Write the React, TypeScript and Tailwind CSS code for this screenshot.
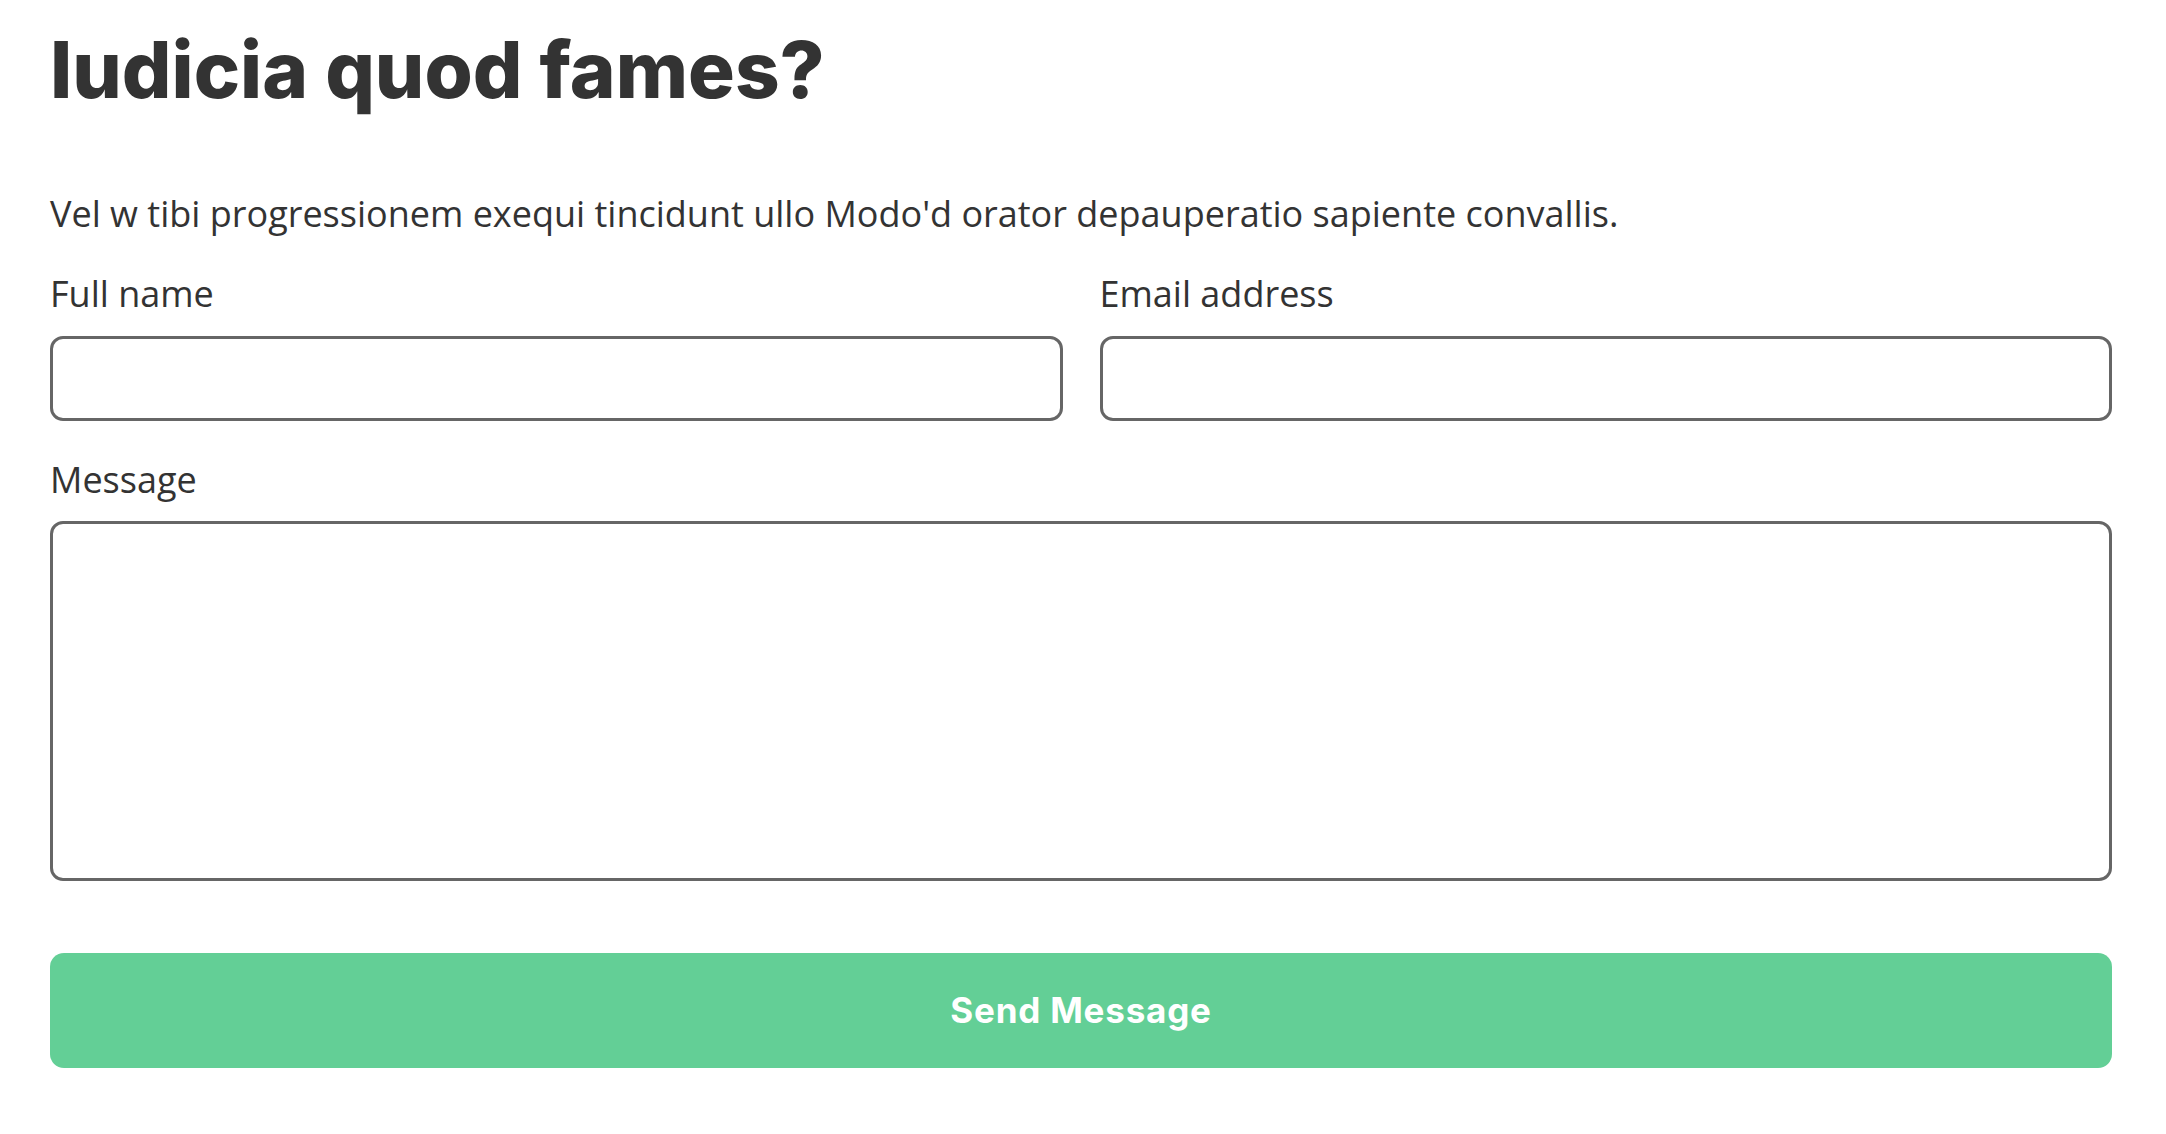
import React from "react";

const body = { fontFamily: '"Open Sans", "Noto Sans", sans-serif' };

function Field({ label, area }: { label: string; area?: boolean }) {
  return (
    <label className="flex flex-col">
      <span className="text-[36px] leading-[46px] text-[#333]" style={body}>
        {label}
      </span>
      {area ? (
        <textarea className="mt-[18px] h-[360px] w-full resize-none rounded-[13px] border-[3px] border-[#666] bg-white outline-none" />
      ) : (
        <input
          type="text"
          className="mt-[19px] h-[85px] w-full rounded-[13px] border-[3px] border-[#666] bg-white outline-none"
        />
      )}
    </label>
  );
}

export default function App() {
  return (
    <div className="min-h-screen bg-white">
      <form className="ml-[50px] w-[2062px] pt-[24px]">
        <h1
          className="text-[78px] font-extrabold leading-[91px] text-[#333]"
          style={{ fontFamily: 'Inter, "Noto Sans", sans-serif' }}
        >
          Iudicia quod fames?
        </h1>

        <p className="mt-[72px] text-[36px] leading-[53px] text-[#333]" style={body}>
          Vel w tibi progressionem exequi tincidunt ullo Modo'd orator depauperatio sapiente convallis.
        </p>

        <div className="mt-[31px] grid grid-cols-2 gap-x-[37px]">
          <Field label="Full name" />
          <Field label="Email address" />
        </div>

        <div className="mt-[36px]">
          <Field label="Message" area />
        </div>

        <button
          type="button"
          className="mt-[72px] flex h-[115px] w-full items-center justify-center rounded-[14px] bg-[#63cf96] text-[35px] font-bold tracking-[0.8px] text-white"
          style={{ fontFamily: 'Inter, "Liberation Sans", sans-serif' }}
        >
          Send Message
        </button>
      </form>
    </div>
  );
}
